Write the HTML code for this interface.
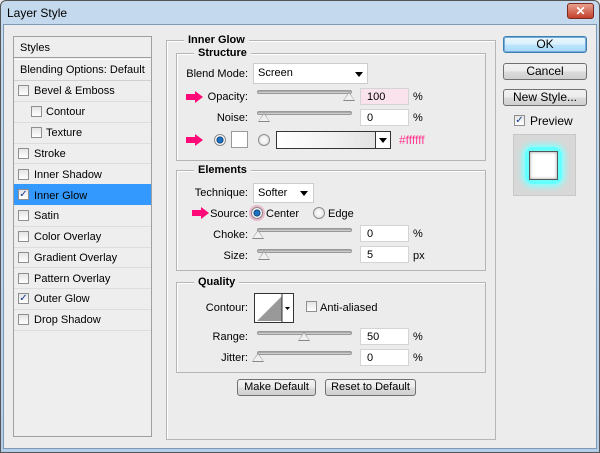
<!DOCTYPE html>
<html><head><meta charset="utf-8"><style>
*{box-sizing:border-box;margin:0;padding:0}
body{width:600px;height:453px;overflow:hidden;background:#ececec;font-family:"Liberation Sans",sans-serif;font-size:11px;color:#000;position:relative}
.a{position:absolute}
.win{left:0;top:0;width:600px;height:453px;background:linear-gradient(#c5d9ee,#b4cde8);border:1px solid #555;border-radius:6px 6px 0 0}
.body{left:3px;top:24px;width:594px;height:425px;background:#ececec;border:1px solid #7a9ab8}
.t{position:absolute;white-space:nowrap;line-height:12px}
.r{text-align:right}
.grp{position:absolute;border:1px solid #b5b5b5;box-shadow:1px 1px 0 #fff inset}
.lbl{position:absolute;background:#ececec;padding:0 4px;font-weight:bold;top:-7px;line-height:12px}
.cb{position:absolute;width:11px;height:11px;border:1px solid #8f8f8f;background:linear-gradient(#e5e5e5,#fff)}
.inp{position:absolute;width:49px;height:17px;background:#fff;border:1px solid #d4d4d4;padding:3px 0 0 6px;line-height:11px}
.trk{position:absolute;height:4px;background:linear-gradient(#999,#ddd);border-radius:2px;border:1px solid #999}
.thumb{position:absolute;width:0;height:0;border-left:6px solid transparent;border-right:6px solid transparent;border-bottom:9px solid #888}
.thumb:after{content:"";position:absolute;left:-5px;top:1px;border-left:5px solid transparent;border-right:5px solid transparent;border-bottom:7px solid #f0f0f0}
.btn{position:absolute;height:17px;border:1px solid #707070;border-radius:3px;background:linear-gradient(#f2f2f2,#ebebeb 50%,#dcdcdc 51%,#cfcfcf);text-align:center;line-height:15px;font-size:12px}
.sel{position:absolute;background:#fff;border:1px solid #ccc;padding:3px 4px;line-height:12px}
.arr{position:absolute;width:0;height:0;border-left:4px solid transparent;border-right:4px solid transparent;border-top:5px solid #000}
.rad{position:absolute;width:12px;height:12px;border-radius:50%;border:1px solid #8a8a8a;background:radial-gradient(#fff,#ddd)}
.pk{position:absolute;width:17px;height:12px}
</style></head><body>
<div class="a win"></div>
<div class="t" style="left:7px;top:7px;font-size:12px">Layer Style</div>
<div class="a" style="left:567px;top:3px;width:27px;height:16px;background:linear-gradient(#e8a090,#c4402a);border:1px solid #7a2a20;border-radius:3px;color:#fff;font-weight:bold;text-align:center;line-height:14px;font-size:12px">✕</div>
<div class="a body"></div>

<div class="a" style="left:13px;top:36px;width:139px;height:401px;border:1px solid #a0a0a0;background:#eee"></div>
<div class="t" style="left:20px;top:42px">Styles</div>
<div class="a" style="left:14px;top:57px;width:137px;height:3px;border-top:1px solid #a0a0a0;border-bottom:1px solid #fff"></div>
<div class="t" style="left:20px;top:64px">Blending Options: Default</div>
<div class="a" style="left:14px;top:80px;width:137px;height:1px;background:#d0d0d0"></div>
<div class="a" style="left:14px;top:184px;width:137px;height:21px;background:#3399ff"></div>
<div class="cb" style="left:18px;top:85px"></div><div class="t" style="left:34px;top:85px">Bevel &amp; Emboss</div>
<div class="cb" style="left:31px;top:106px"></div><div class="t" style="left:46px;top:106px">Contour</div>
<div class="cb" style="left:31px;top:127px"></div><div class="t" style="left:46px;top:127px">Texture</div>
<div class="cb" style="left:18px;top:148px"></div><div class="t" style="left:34px;top:148px">Stroke</div>
<div class="cb" style="left:18px;top:169px"></div><div class="t" style="left:34px;top:169px">Inner Shadow</div>
<div class="cb" style="left:18px;top:189px;color:#123a8a;font-size:10px;line-height:9px;text-align:center">✓</div><div class="t" style="left:34px;top:190px">Inner Glow</div>
<div class="cb" style="left:18px;top:210px"></div><div class="t" style="left:34px;top:210px">Satin</div>
<div class="cb" style="left:18px;top:231px"></div><div class="t" style="left:34px;top:231px">Color Overlay</div>
<div class="cb" style="left:18px;top:252px"></div><div class="t" style="left:34px;top:252px">Gradient Overlay</div>
<div class="cb" style="left:18px;top:273px"></div><div class="t" style="left:34px;top:273px">Pattern Overlay</div>
<div class="cb" style="left:18px;top:293px;color:#123a8a;font-size:10px;line-height:9px;text-align:center">✓</div><div class="t" style="left:34px;top:293px">Outer Glow</div>
<div class="cb" style="left:18px;top:314px"></div><div class="t" style="left:34px;top:314px">Drop Shadow</div>
<div class="a" style="left:14px;top:101px;width:137px;height:1px;background:#ddd"></div>
<div class="a" style="left:14px;top:122px;width:137px;height:1px;background:#ddd"></div>
<div class="a" style="left:14px;top:143px;width:137px;height:1px;background:#ddd"></div>
<div class="a" style="left:14px;top:163px;width:137px;height:1px;background:#ddd"></div>
<div class="a" style="left:14px;top:226px;width:137px;height:1px;background:#ddd"></div>
<div class="a" style="left:14px;top:247px;width:137px;height:1px;background:#ddd"></div>
<div class="a" style="left:14px;top:267px;width:137px;height:1px;background:#ddd"></div>
<div class="a" style="left:14px;top:288px;width:137px;height:1px;background:#ddd"></div>
<div class="a" style="left:14px;top:309px;width:137px;height:1px;background:#ddd"></div>
<div class="a" style="left:14px;top:330px;width:137px;height:1px;background:#ddd"></div>

<div class="grp" style="left:166px;top:40px;width:330px;height:400px"><div class="lbl" style="left:17px">Inner Glow</div></div>
<div class="grp" style="left:176px;top:53px;width:310px;height:108px"><div class="lbl" style="left:17px">Structure</div></div>
<div class="grp" style="left:176px;top:170px;width:310px;height:101px"><div class="lbl" style="left:17px">Elements</div></div>
<div class="grp" style="left:176px;top:282px;width:310px;height:91px"><div class="lbl" style="left:17px">Quality</div></div>

<div class="t r" style="left:180px;width:68px;top:68px">Blend Mode:</div>
<div class="sel" style="left:253px;top:63px;width:115px;height:21px">Screen</div><div class="arr" style="left:355px;top:72px"></div>
<div class="pk" style="left:186px;top:91px"><svg width="17" height="12"><path d="M0 3h9V0l8 6-8 6V9H0z" fill="#ff0a78"/></svg></div>
<div class="t r" style="left:180px;width:68px;top:91px">Opacity:</div>
<div class="trk" style="left:257px;top:90px;width:95px"></div><div class="thumb" style="left:343px;top:92px"></div>
<div class="inp" style="left:360px;top:88px;background:#fbe3ee">100</div><div class="t" style="left:413px;top:91px">%</div>
<div class="t r" style="left:180px;width:68px;top:112px">Noise:</div>
<div class="trk" style="left:257px;top:111px;width:95px"></div><div class="thumb" style="left:258px;top:113px"></div>
<div class="inp" style="left:360px;top:109px">0</div><div class="t" style="left:413px;top:112px">%</div>
<div class="pk" style="left:186px;top:134px"><svg width="17" height="12"><path d="M0 3h9V0l8 6-8 6V9H0z" fill="#ff0a78"/></svg></div>
<div class="rad" style="left:214px;top:134px;background:radial-gradient(#1e70c0 30%,#0a3a70 45%,#fff 55%,#ddd)"></div>
<div class="a" style="left:231px;top:131px;width:17px;height:17px;background:#fff;border:1px solid #999"></div>
<div class="rad" style="left:258px;top:134px"></div>
<div class="a" style="left:276px;top:131px;width:115px;height:18px;border:1px solid #333;background:linear-gradient(90deg,#fff,#f4f4f4 40%,#ddd);"></div>
<div class="a" style="left:375px;top:131px;width:16px;height:18px;border:1px solid #333;background:#fff"></div><div class="arr" style="left:379px;top:138px"></div>
<div class="t" style="left:399px;top:134px;color:#ff3a90;font-size:12px">#ffffff</div>

<div class="t r" style="left:180px;width:68px;top:187px">Technique:</div>
<div class="sel" style="left:253px;top:183px;width:61px;height:20px">Softer</div><div class="arr" style="left:300px;top:191px"></div>
<div class="pk" style="left:192px;top:207px"><svg width="17" height="12"><path d="M0 3h9V0l8 6-8 6V9H0z" fill="#ff0a78"/></svg></div>
<div class="t r" style="left:180px;width:68px;top:208px">Source:</div>
<div class="a" style="left:249px;top:205px;width:16px;height:16px;border-radius:50%;background:#e8b8cc"></div>
<div class="rad" style="left:251px;top:207px;background:radial-gradient(#1e70c0 30%,#0a3a70 45%,#fff 55%,#ddd)"></div>
<div class="t" style="left:266px;top:208px">Center</div>
<div class="rad" style="left:313px;top:207px"></div><div class="t" style="left:328px;top:208px">Edge</div>
<div class="t r" style="left:180px;width:68px;top:229px">Choke:</div>
<div class="trk" style="left:257px;top:228px;width:95px"></div><div class="thumb" style="left:252px;top:230px"></div>
<div class="inp" style="left:360px;top:225px">0</div><div class="t" style="left:413px;top:228px">%</div>
<div class="t r" style="left:180px;width:68px;top:250px">Size:</div>
<div class="trk" style="left:257px;top:249px;width:95px"></div><div class="thumb" style="left:258px;top:251px"></div>
<div class="inp" style="left:360px;top:246px">5</div><div class="t" style="left:413px;top:250px">px</div>

<div class="t r" style="left:180px;width:68px;top:302px">Contour:</div>
<div class="a" style="left:254px;top:293px;width:40px;height:30px;border:1px solid #333;background:#fff"><svg width="38" height="28" style="position:absolute;left:0;top:0"><path d="M2 27L27 2V27z" fill="#999"/><rect x="27" y="0" width="11" height="28" fill="#fff"/><path d="M27 0V28" stroke="#333"/><path d="M30 13h5l-2.5 3z" fill="#000"/></svg></div>
<div class="cb" style="left:306px;top:301px"></div><div class="t" style="left:320px;top:302px">Anti-aliased</div>
<div class="t r" style="left:180px;width:68px;top:331px">Range:</div>
<div class="trk" style="left:257px;top:331px;width:95px"></div><div class="thumb" style="left:298px;top:332px"></div>
<div class="inp" style="left:360px;top:328px">50</div><div class="t" style="left:413px;top:331px">%</div>
<div class="t r" style="left:180px;width:68px;top:352px">Jitter:</div>
<div class="trk" style="left:257px;top:351px;width:95px"></div><div class="thumb" style="left:252px;top:353px"></div>
<div class="inp" style="left:360px;top:349px">0</div><div class="t" style="left:413px;top:352px">%</div>

<div class="btn" style="left:237px;top:379px;width:79px;font-size:11px">Make Default</div>
<div class="btn" style="left:325px;top:379px;width:91px;font-size:11px">Reset to Default</div>

<div class="btn" style="left:503px;top:36px;width:84px;border-color:#3c7fb1;background:linear-gradient(#eaf6fd,#d9f0fc 50%,#bee6fd 51%,#a7d9f5);box-shadow:0 0 0 1px #7ad inset">OK</div>
<div class="btn" style="left:503px;top:63px;width:84px">Cancel</div>
<div class="btn" style="left:503px;top:89px;width:84px">New Style...</div>
<div class="cb" style="left:514px;top:115px;color:#123a8a;font-size:10px;line-height:9px;text-align:center">✓</div>
<div class="t" style="left:530px;top:115px;font-size:12px">Preview</div>
<div class="a" style="left:513px;top:134px;width:63px;height:62px;background:#d8d8d8;border:1px solid #c8c8c8"></div>
<div class="a" style="left:525px;top:147px;width:37px;height:37px;border-radius:8px;background:#6ff;box-shadow:0 0 6px 3px #8ff"></div>
<div class="a" style="left:529px;top:151px;width:29px;height:29px;background:#fff;border:1px solid #555;box-shadow:inset 0 0 3px #999"></div>
</body></html>
